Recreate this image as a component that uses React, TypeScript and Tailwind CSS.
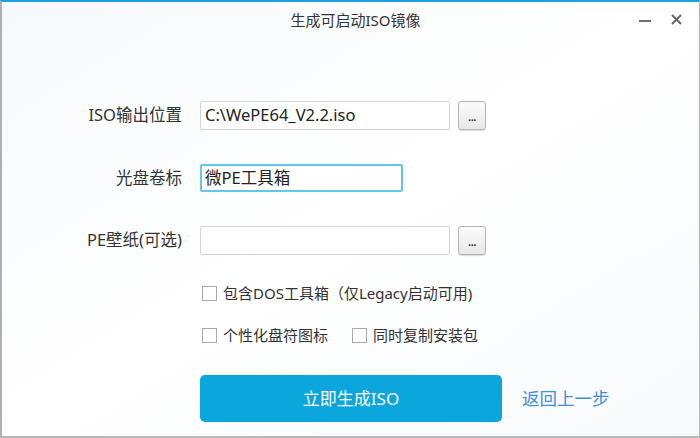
import React from "react";

const font = { fontFamily: '"Noto Sans", "Noto Sans CJK SC", sans-serif' };

function Checkbox() {
  return <span className="inline-block w-[15px] h-[15px] border border-[#a8a8a8] bg-white shrink-0" />;
}

function DotsButton() {
  return (
    <button className="w-[28px] h-[29px] ml-[8px] rounded-[3px] border border-[#b4b4b4] bg-gradient-to-b from-[#fbfbfb] to-[#e8e8e8] shadow-[0_1px_1px_rgba(0,0,0,0.15)] flex items-end justify-center pb-[7px]">
      <span className="text-[11px] leading-none font-bold text-[#333] tracking-[-0.5px]">...</span>
    </button>
  );
}

export default function App() {
  return (
    <div
      className="w-[700px] h-[438px] flex flex-col border-t-2 border-t-[#1ba1e2] border-l-2 border-l-[#b0b0b0] border-r border-r-[#b8b8b8] border-b-2 border-b-[#b8b8b8] bg-gradient-to-br from-[#f6f9fb] via-white to-[#f7fafc] text-[#333]"
      style={font}
    >
      <div className="relative h-[36px] flex items-center justify-center pl-[10px]">
        <span className="text-[15px] text-[#333]">生成可启动ISO镜像</span>
        <div className="absolute right-[17px] top-[12px] flex items-center gap-[20px]">
          <span className="block w-[12px] h-[2px] bg-[#6e6e6e] mt-[3px]" />
          <svg width="11" height="11" viewBox="0 0 11 11">
            <path d="M1 1 L10 10 M10 1 L1 10" stroke="#666" strokeWidth="2" />
          </svg>
        </div>
      </div>

      <div className="flex flex-col pt-[63px]">
        <div className="flex items-center h-[29px]">
          <div className="w-[180px] text-right text-[16.5px]">ISO输出位置</div>
          <div className="w-[18px]" />
          <div className="w-[250px] h-[29px] border border-[#d4d4d4] rounded-[2px] bg-white flex items-center px-[4px] text-[16.5px] text-[#222]">
            C:\WePE64_V2.2.iso
          </div>
          <DotsButton />
        </div>

        <div className="flex items-center h-[28px] mt-[34px]">
          <div className="w-[180px] text-right text-[16.5px]">光盘卷标</div>
          <div className="w-[18px]" />
          <div className="w-[203px] h-[28px] border-2 border-[#62c6ee] rounded-[2px] bg-white flex items-center px-[3px] text-[16.5px] text-[#222]">
            微PE工具箱
          </div>
        </div>

        <div className="flex items-center h-[29px] mt-[34px]">
          <div className="w-[180px] text-right text-[16.5px]">PE壁纸(可选)</div>
          <div className="w-[18px]" />
          <div className="w-[250px] h-[29px] border border-[#d4d4d4] rounded-[2px] bg-white" />
          <DotsButton />
        </div>

        <div className="flex items-center ml-[200px] mt-[30px] h-[16px] gap-[6px] text-[15px]">
          <Checkbox />
          <span>包含DOS工具箱（仅Legacy启动可用)</span>
        </div>

        <div className="flex items-center ml-[200px] mt-[26px] h-[16px] text-[15px]">
          <Checkbox />
          <span className="ml-[6px] w-[129px]">个性化盘符图标</span>
          <Checkbox />
          <span className="ml-[6px]">同时复制安装包</span>
        </div>

        <div className="flex items-center ml-[198px] mt-[32px]">
          <button className="w-[302px] h-[47px] rounded-[5px] bg-[#0aa6dc] text-white text-[17px]">
            立即生成ISO
          </button>
          <span className="ml-[20px] text-[17.5px] text-[#3d8fe0]">返回上一步</span>
        </div>
      </div>
    </div>
  );
}
